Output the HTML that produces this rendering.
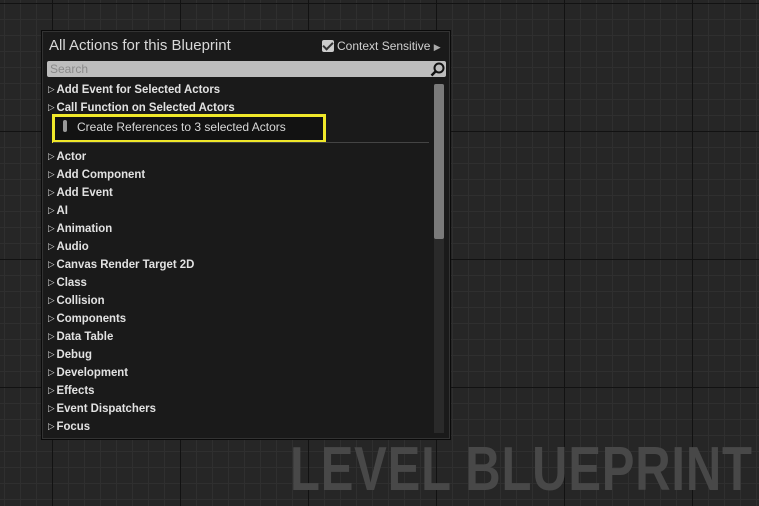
<!DOCTYPE html>
<html><head><style>
body{margin:0;width:759px;height:506px;overflow:hidden;position:relative;font-family:"Liberation Sans",sans-serif;
background-color:#262626;
background-image:
linear-gradient(90deg,#121212 0 1px,transparent 1px),
linear-gradient(0deg,transparent 127px,#121212 127px),
linear-gradient(90deg,#2f2f2f 0 1px,transparent 1px),
linear-gradient(0deg,transparent 15px,#2f2f2f 15px);
background-size:128px 128px,128px 128px,16px 16px,16px 16px;
background-position:52px 0,0 3px,4px 0,0 3px;}
.lb{position:absolute;left:290px;top:439px;font-size:62px;font-weight:bold;color:#484848;transform:scaleX(0.79);transform-origin:0 0;letter-spacing:1px;white-space:nowrap;line-height:62px}
.panel{position:absolute;left:41px;top:30px;width:408px;height:408px;background:#1a1a1a;border:1px solid #0a0a0a;box-shadow:0 0 0 1px #333 inset}
.title{position:absolute;left:7px;top:6px;color:#d8d8d8;font-size:15px}
.cs{position:absolute;left:280px;top:8px;color:#d0d0d0;font-size:12px}
.cb{display:inline-block;width:12px;height:12px;background:#ccc;border-radius:2px;vertical-align:-2px;margin-right:3px;position:relative}
.cb:after{content:"";position:absolute;left:3px;top:0px;width:4px;height:8px;border:solid #333;border-width:0 2px 2px 0;transform:rotate(45deg)}
.search{position:absolute;left:5px;top:30px;width:399px;height:16px;background:#bdbdbd;border-radius:2px}
.search span{position:absolute;left:3px;top:1px;font-size:12px;color:#8a8a8a}
.row{position:absolute;left:6px;color:#e2e2e2;font-size:12px;font-weight:bold;transform:scaleX(0.95);transform-origin:0 0;white-space:nowrap}
.row:before{content:"\25B7";font-size:9px;font-weight:normal;color:#ddd;margin-right:2px;vertical-align:1px}
.sb{position:absolute;left:392px;top:53px;width:10px;height:349px;background:#2a2a2a}
.sb div{width:10px;height:155px;background:#7a7a7a;border-radius:2px}
.hl{position:absolute;left:10px;top:83px;width:268px;height:23px;border:3px solid #f0e82a;background:#121212}
.hl span{position:absolute;left:22px;top:3px;color:#d8d8d8;font-size:12px}
.sep{position:absolute;left:11px;top:111px;width:376px;height:1px;background:#444}
</style></head><body>
<div class="lb">LEVEL BLUEPRINT</div>
<div class="panel">
<div class="title">All Actions for this Blueprint</div>
<div class="cs"><span class="cb"></span>Context Sensitive <span style="font-size:9px;color:#aaa">&#9654;</span></div>
<div class="search"><span>Search</span>
<svg style="position:absolute;right:1px;top:1px" width="15" height="15" viewBox="0 0 15 15"><circle cx="9" cy="6" r="4.5" fill="none" stroke="#111" stroke-width="2"/><path d="M5.5 9.5L1.5 13.5" stroke="#111" stroke-width="2.5"/></svg></div>
<div class="row" style="top:51px">Add Event for Selected Actors</div>
<div class="row" style="top:69px">Call Function on Selected Actors</div>
<div class="hl"><svg style="position:absolute;left:6px;top:2px" width="8" height="14"><rect x="2" y="1" width="4" height="12" rx="2" fill="#999"/></svg><span>Create References to 3 selected Actors</span></div>
<div class="sep"></div>
<div class="row" style="top:118px">Actor</div>
<div class="row" style="top:136px">Add Component</div>
<div class="row" style="top:154px">Add Event</div>
<div class="row" style="top:172px">AI</div>
<div class="row" style="top:190px">Animation</div>
<div class="row" style="top:208px">Audio</div>
<div class="row" style="top:226px">Canvas Render Target 2D</div>
<div class="row" style="top:244px">Class</div>
<div class="row" style="top:262px">Collision</div>
<div class="row" style="top:280px">Components</div>
<div class="row" style="top:298px">Data Table</div>
<div class="row" style="top:316px">Debug</div>
<div class="row" style="top:334px">Development</div>
<div class="row" style="top:352px">Effects</div>
<div class="row" style="top:370px">Event Dispatchers</div>
<div class="row" style="top:388px">Focus</div>
<div class="sb"><div></div></div>
</div>
</body></html>
